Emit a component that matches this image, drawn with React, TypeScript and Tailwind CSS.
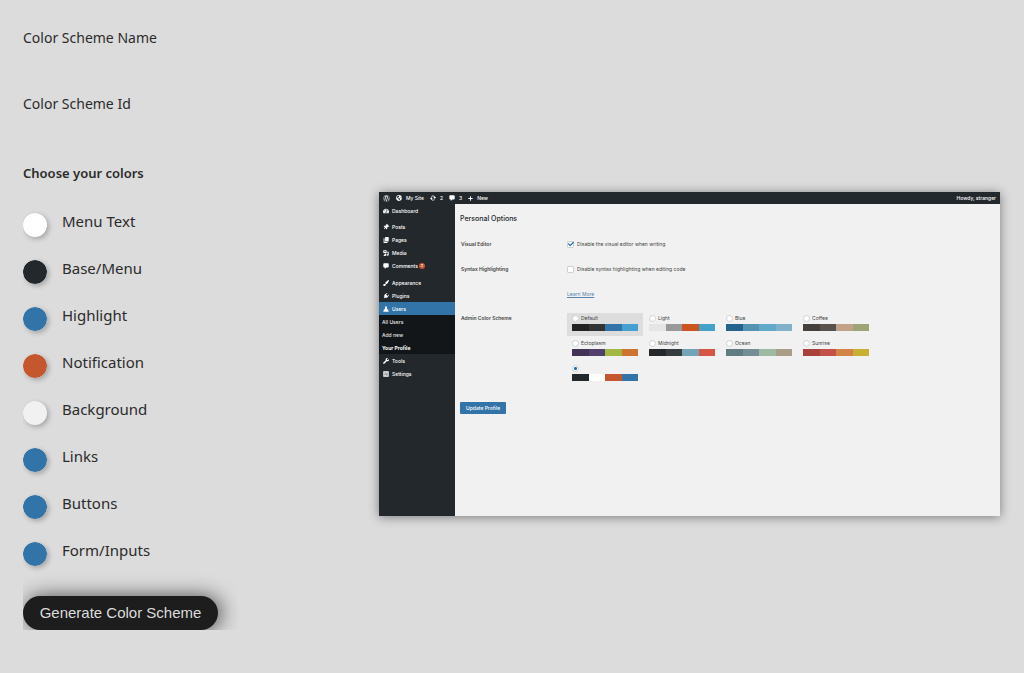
import { useState } from 'react';
import type { ReactNode } from 'react';
import {
  FaCheck,
  FaGlobeAmericas,
  FaPaintBrush,
  FaPlug,
  FaPlus,
  FaTachometerAlt,
  FaThumbtack,
  FaWordpress,
  FaWrench,
} from 'react-icons/fa';

interface ColorOption {
  id: string;
  label: string;
  value: string;
}

interface Scheme {
  name: string;
  colors: string[];
}

const initialColors: ColorOption[] = [
  { id: 'text', label: 'Menu Text', value: '#ffffff' },
  { id: 'base', label: 'Base/Menu', value: '#23282d' },
  { id: 'highlight', label: 'Highlight', value: '#3273a8' },
  { id: 'notification', label: 'Notification', value: '#c5572e' },
  { id: 'background', label: 'Background', value: '#f1f1f1' },
  { id: 'links', label: 'Links', value: '#3273a8' },
  { id: 'buttons', label: 'Buttons', value: '#3273a8' },
  { id: 'inputs', label: 'Form/Inputs', value: '#3273a8' },
];

const schemes: Scheme[] = [
  { name: 'Default', colors: ['#222222', '#333333', '#3273a8', '#469fd2'] },
  { name: 'Light', colors: ['#e5e5e5', '#999999', '#cb5520', '#45a1c9'] },
  { name: 'Blue', colors: ['#23648c', '#5493b1', '#62a8cb', '#7fb1ca'] },
  { name: 'Coffee', colors: ['#46403c', '#59524c', '#c3a28a', '#9ea476'] },
  { name: 'Ectoplasm', colors: ['#413256', '#523f6d', '#a3b745', '#cd7430'] },
  { name: 'Midnight', colors: ['#25282b', '#363b3f', '#72a3b7', '#d65645'] },
  { name: 'Ocean', colors: ['#627c83', '#738e96', '#9ebaa0', '#aa9d88'] },
  { name: 'Sunrise', colors: ['#a8403c', '#c4504a', '#d28345', '#c8b035'] },
  { name: '', colors: ['#23282d', '#ffffff', '#c5572e', '#3273a8'] },
];

function Glyph({ d }: { d: string }) {
  return (
    <svg viewBox="0 0 20 20" className="size-[6px] shrink-0" fill="currentColor" fillRule="evenodd">
      <path d={d} />
    </svg>
  );
}

const glyphs = {
  update: 'M10 2a8 8 0 0 1 7 5h3l-4 6-5-6h3a5 5 0 0 0-8-1L4 4a8 8 0 0 1 6-2zM4 7l5 6H6a5 5 0 0 0 8 1l2 2a8 8 0 0 1-13-3H0z',
  comment: 'M4 1h12a3 3 0 0 1 3 3v8a3 3 0 0 1-3 3h-5l-5 5v-5H4a3 3 0 0 1-3-3V4a3 3 0 0 1 3-3z',
  pages: 'M7 0h12v15H7zM2 4h3v13h10v3H2z',
  media: 'M1 1h11v9H1zM4 4v3h5V4zM14 6h5v10a3 3 0 1 1-3-3V9h-2zM6 12h5v7H8a3 3 0 1 1-2-4z',
  user: 'M10 1a4 5 0 0 1 2 9l5 2 2 7H1l2-7 5-2a4 5 0 0 1 2-9z',
  settings: 'M1 1h18v18H1zM5 5v3h4V5zM11 6v2h5V6zM11 11v4h4v-4zM4 12v2h5v-2z',
};

function TextField({ id, label }: { id: string; label: string }) {
  return (
    <div className="h-[66px]">
      <label htmlFor={id} className="block text-sm leading-5">
        {label}
      </label>
      <input id={id} type="text" className="block h-7 w-full bg-transparent text-sm outline-none" />
    </div>
  );
}

function MenuItem({
  icon,
  active,
  children,
}: {
  icon: ReactNode;
  active?: boolean;
  children: ReactNode;
}) {
  return (
    <a
      href="#"
      className={`flex h-[13px] items-center gap-[3px] pl-1 ${active ? 'bg-[#3273a8]' : ''}`}
    >
      <span className="flex w-[6px] justify-center">{icon}</span>
      {children}
    </a>
  );
}

function AdminBar() {
  return (
    <header className="flex h-3 items-center justify-between bg-[#23282d] px-1 font-medium text-white">
      <nav className="flex items-center gap-[6px]">
        <FaWordpress size={7} className="text-[#c8cacc]" />
        <a href="#" className="flex items-center gap-1">
          <FaGlobeAmericas size={6} />
          My Site
        </a>
        <a href="#" className="flex items-center gap-1">
          <Glyph d={glyphs.update} />2
        </a>
        <a href="#" className="flex items-center gap-1">
          <Glyph d={glyphs.comment} />3
        </a>
        <a href="#" className="flex items-center gap-1">
          <FaPlus size={5} />
          New
        </a>
      </nav>
      <span>Howdy, stranger</span>
    </header>
  );
}

function Sidebar() {
  return (
    <nav className="flex w-[76px] shrink-0 flex-col bg-[#23282d] font-medium text-white">
      <MenuItem icon={<FaTachometerAlt size={6} />}>Dashboard</MenuItem>
      <div className="mt-[3px]">
        <MenuItem icon={<FaThumbtack size={6} className="rotate-45" />}>Posts</MenuItem>
        <MenuItem icon={<Glyph d={glyphs.pages} />}>Pages</MenuItem>
        <MenuItem icon={<Glyph d={glyphs.media} />}>Media</MenuItem>
        <MenuItem icon={<Glyph d={glyphs.comment} />}>
          <span className="flex items-center gap-px">
            Comments
            <span className="flex size-[6px] items-center justify-center rounded-full bg-[#c5572e] text-[4px] leading-none">
              2
            </span>
          </span>
        </MenuItem>
      </div>
      <div className="mt-1">
        <MenuItem icon={<FaPaintBrush size={6} />}>Appearance</MenuItem>
        <MenuItem icon={<FaPlug size={6} className="rotate-45" />}>Plugins</MenuItem>
        <MenuItem icon={<Glyph d={glyphs.user} />} active>
          Users
        </MenuItem>
        <div className="bg-[#131619] text-[#e4e4e4]">
          <a href="#" className="flex h-[13px] items-center pl-[3px]">All Users</a>
          <a href="#" className="flex h-[13px] items-center pl-[3px]">Add new</a>
          <a href="#" className="flex h-[13px] items-center pl-[3px] font-bold text-white">Your Profile</a>
        </div>
        <MenuItem icon={<FaWrench size={6} />}>Tools</MenuItem>
        <MenuItem icon={<Glyph d={glyphs.settings} />}>Settings</MenuItem>
      </div>
    </nav>
  );
}

function CheckRow({ label, checked }: { label: string; checked?: boolean }) {
  return (
    <label className="flex items-center gap-[3px]">
      <span className="grid size-[7px] place-items-center">
        <input
          type="checkbox"
          defaultChecked={checked}
          className="peer size-[7px] appearance-none rounded-[1px] border border-[#cfd1d3] bg-white [grid-area:1/1]"
        />
        <FaCheck
          size={6}
          className="pointer-events-none hidden text-[#1e6cb0] [grid-area:1/1] peer-checked:block"
        />
      </span>
      {label}
    </label>
  );
}

function SchemeOption({ scheme }: { scheme: Scheme }) {
  return (
    <label
      className={`block h-[23px] px-[5px] pt-px ${scheme.name === 'Default' ? 'bg-[#dddddd]' : ''}`}
    >
      <span className="flex h-[9px] items-center gap-[2px]">
        <input
          type="radio"
          name="scheme"
          aria-label={scheme.name || 'Custom'}
          defaultChecked={scheme.name === ''}
          className="size-[7px] appearance-none rounded-full border border-[#cfd1d3] bg-white checked:bg-[radial-gradient(circle,#1e6cb0_35%,white_50%)]"
        />
        {scheme.name}
      </span>
      <span className="mt-px flex h-[7px]">
        {scheme.colors.map((color) => (
          <span key={color} className="flex-1" style={{ backgroundColor: color }} />
        ))}
      </span>
    </label>
  );
}

function ProfileForm() {
  return (
    <main className="flex-1 bg-[#f1f1f1] pl-[5px] pt-[10px] text-[#444444]">
      <h2 className="text-[7px] font-medium leading-[10px] text-[#23282d]">Personal Options</h2>
      <div className="mt-[15px] grid grid-cols-[106px_1fr] pl-px">
        <div className="h-[25px] font-semibold leading-[10px]">Visual Editor</div>
        <div className="h-[25px] leading-[10px]">
          <CheckRow label="Disable the visual editor when writing" checked />
        </div>
        <div className="h-[49px] font-semibold leading-[10px]">Syntax Highlighting</div>
        <div className="leading-[10px]">
          <CheckRow label="Disable syntax highlighting when editing code" />
          <a href="#" className="mt-[15px] block text-[#5583ad] underline">
            Learn More
          </a>
        </div>
        <div className="font-semibold leading-[10px]">Admin Color Scheme</div>
        <div className="grid grid-cols-[repeat(4,76px)] gap-x-px gap-y-[2px] leading-[9px]">
          {schemes.map((scheme) => (
            <SchemeOption key={scheme.name} scheme={scheme} />
          ))}
        </div>
      </div>
      <button
        type="button"
        className="mt-4 block h-3 rounded-[1px] bg-[#3273a8] px-[6px] font-medium leading-3 text-white"
      >
        Update Profile
      </button>
    </main>
  );
}

export default function App() {
  const [colors, setColors] = useState(initialColors);

  const updateColor = (id: string, value: string) => {
    setColors(colors.map((color) => (color.id === id ? { ...color, value } : color)));
  };

  return (
    <div className="flex min-h-screen items-start bg-[#dcdcdc] pr-6 font-['Noto_Sans',sans-serif] text-[#2b2b2b]">
      <form
        className="ml-[23px] w-[215px] shrink-0 overflow-hidden pt-7"
        onSubmit={(e) => e.preventDefault()}
      >
        <TextField id="scheme-name" label="Color Scheme Name" />
        <TextField id="scheme-id" label="Color Scheme Id" />
        <h2 className="pt-[3px] text-[13px] font-semibold leading-5">Choose your colors</h2>

        <div className="mt-[26px]">
          {colors.map((color) => (
            <div key={color.id} className="flex h-[47px] items-start gap-[15px]">
              <input
                id={color.id}
                type="color"
                value={color.value}
                onChange={(e) => updateColor(color.id, e.target.value)}
                className="mt-1 size-6 appearance-none rounded-full shadow-[2px_2px_5px_rgba(0,0,0,0.25)] [&::-webkit-color-swatch-wrapper]:p-0 [&::-webkit-color-swatch]:rounded-full [&::-webkit-color-swatch]:border-0"
              />
              <label htmlFor={color.id} className="text-[15px] leading-6">
                {color.label}
              </label>
            </div>
          ))}
        </div>

        <button
          type="submit"
          className="mt-[11px] block h-[34px] w-[195px] rounded-full bg-[#1d1d1d] font-['Liberation_Sans',sans-serif] text-[15px] text-[#dcdcdc] shadow-[3px_0_20px_rgba(0,0,0,0.65)]"
        >
          Generate Color Scheme
        </button>
      </form>

      <section className="ml-[141px] mt-48 flex h-[324px] flex-1 flex-col font-['Inter',sans-serif] text-[5px] leading-[10px] shadow-[0_1px_10px_rgba(0,0,0,0.45)]">
        <AdminBar />
        <div className="flex flex-1">
          <Sidebar />
          <ProfileForm />
        </div>
      </section>
    </div>
  );
}
